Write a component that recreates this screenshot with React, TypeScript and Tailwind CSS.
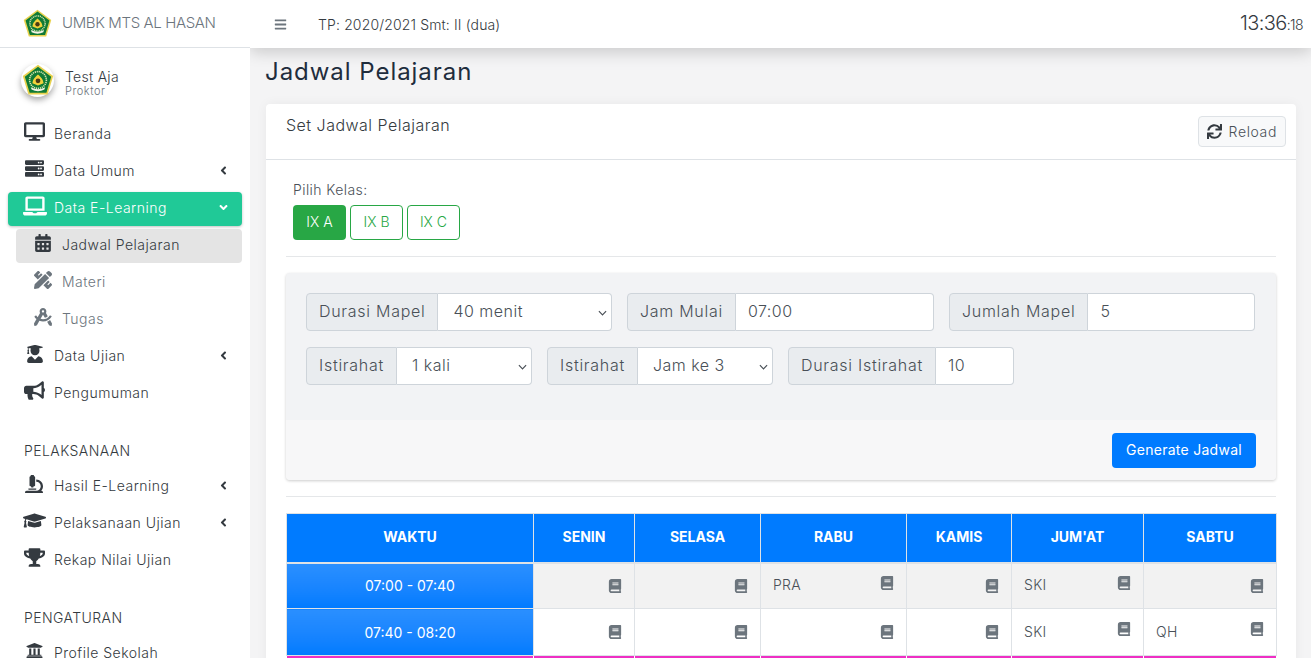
import type { ReactNode } from "react";
import {
  FaAngleDown,
  FaAngleLeft,
  FaBars,
  FaBook,
  FaBullhorn,
  FaCalendarAlt,
  FaDesktop,
  FaDraftingCompass,
  FaGraduationCap,
  FaLaptop,
  FaMicroscope,
  FaPencilRuler,
  FaServer,
  FaSync,
  FaTrophy,
  FaUniversity,
  FaUserGraduate,
} from "react-icons/fa";

function Logo({ className }: { className: string }) {
  return (
    <svg viewBox="0 0 40 40" className={className}>
      <polygon points="20,1 39,15 32,38 8,38 1,15" fill="#e9d24f" />
      <polygon points="20,3.5 36.5,15.8 30.5,36 9.5,36 3.5,15.8" fill="#0f7a35" />
      <circle cx="20" cy="20" r="10.5" fill="none" stroke="#d8e6b0" strokeWidth="2" strokeDasharray="1.5 1" />
      <path d="M20 13 C16 17 14 18 13 24 L20 27 L27 24 C26 18 24 17 20 13Z" fill="#f2d23c" />
      <circle cx="20" cy="21" r="3" fill="#4b3a12" />
      <path d="M11 29 Q20 34 29 29 L28 32 Q20 36 12 32Z" fill="#f4f4e4" />
    </svg>
  );
}

type MenuItem = { icon: ReactNode; label: string; chevron?: boolean };

function Item({ icon, label, chevron }: MenuItem) {
  return (
    <a className="mx-2 mb-[3px] flex h-[34px] items-center pb-1 pl-4 pr-3 text-[#343a40]">
      <span className="-mt-[3px] flex w-[30px] shrink-0 text-[20px]">{icon}</span>
      <span className="flex-1 text-[14px] tracking-[0.035em]">{label}</span>
      {chevron && <FaAngleLeft className="text-[13px]" />}
    </a>
  );
}

function SubItem({ icon, label, active }: { icon: ReactNode; label: string; active?: boolean }) {
  return (
    <a
      className={`ml-4 mr-2 mb-[3px] flex h-[34px] items-center rounded pb-1 pl-[18px] ${
        active ? "bg-[#e4e4e4] text-[#343a40]" : "text-[#6c757d]"
      }`}
    >
      <span className="-mt-[3px] flex w-[28px] shrink-0 text-[18px]">{icon}</span>
      <span className="text-[14px] tracking-[0.035em]">{label}</span>
    </a>
  );
}

function Sidebar() {
  return (
    <aside className="z-20 h-full w-[250px] shrink-0 bg-white">
      <div className="flex h-[48px] items-center border-b border-[#dee2e6] pl-[23px]">
        <Logo className="h-[29px] w-[29px]" />
        <span className="ml-[10px] text-[15px] tracking-[-0.025em] text-[#6c757d]">UMBK MTS AL HASAN</span>
      </div>
      <div className="flex h-[70px] items-center pb-[6px] pl-[21px]">
        <div className="flex h-[33px] w-[33px] items-center justify-center rounded-full bg-white shadow-[0_3px_6px_rgba(0,0,0,0.35)]">
          <Logo className="h-[32px] w-[32px]" />
        </div>
        <div className="ml-[11px] mt-[5px]">
          <div className="text-[14px] leading-[17px] tracking-[0.02em] text-[#343a40]">Test Aja</div>
          <div className="text-[11px] leading-[13px] tracking-[0.05em] text-[#6c757d]">Proktor</div>
        </div>
      </div>
      <nav>
        <Item icon={<FaDesktop className="text-[21px]" />} label="Beranda" />
        <Item icon={<FaServer className="ml-px text-[19px]" />} label="Data Umum" chevron />
        <a className="mx-2 mb-[3px] flex h-[34px] items-center rounded bg-[#20c997] pb-1 pl-4 pr-3 text-white shadow-[0_1px_3px_rgba(0,0,0,0.25)]">
          <span className="-mt-[3px] flex w-[30px] shrink-0">
            <FaLaptop className="-ml-px text-[24px]" />
          </span>
          <span className="flex-1 text-[14px] tracking-[0.035em]">Data E-Learning</span>
          <FaAngleDown className="text-[13px]" />
        </a>
        <SubItem active icon={<FaCalendarAlt />} label="Jadwal Pelajaran" />
        <SubItem icon={<FaPencilRuler />} label="Materi" />
        <SubItem icon={<FaDraftingCompass />} label="Tugas" />
        <Item icon={<FaUserGraduate className="ml-[1.5px] text-[18px]" />} label="Data Ujian" chevron />
        <Item icon={<FaBullhorn className="text-[21px]" />} label="Pengumuman" />
        <div className="mt-[31px] mb-[11px] pl-6 text-[14px] leading-[17px] tracking-[0.03em] text-[#343a40]">PELAKSANAAN</div>
        <Item icon={<FaMicroscope className="ml-px text-[18px]" />} label="Hasil E-Learning" chevron />
        <Item icon={<FaGraduationCap className="-ml-px text-[23px]" />} label="Pelaksanaan Ujian" chevron />
        <Item icon={<FaTrophy className="text-[21px]" />} label="Rekap Nilai Ujian" />
        <div className="mt-[31px] mb-[11px] pl-6 text-[14px] leading-[17px] tracking-[0.03em] text-[#343a40]">PENGATURAN</div>
        <Item icon={<FaUniversity className="ml-[2px] text-[17px]" />} label="Profile Sekolah" />
      </nav>
    </aside>
  );
}

function Label({ children }: { children: ReactNode }) {
  return (
    <span className="flex h-full shrink-0 items-center rounded-l border border-[#ced4da] bg-[#e9ecef] px-3 pb-0.5 text-[16px] tracking-[0.045em] text-[#495057]">
      {children}
    </span>
  );
}

function SelectField({ label, value, className }: { label: string; value: string; className: string }) {
  return (
    <div className={`flex h-[38px] ${className}`}>
      <Label>{label}</Label>
      <div className="relative h-full min-w-0 flex-1">
        <select
          defaultValue={value}
          className="h-full w-full appearance-none rounded-r border border-l-0 border-[#ced4da] bg-white pb-0.5 pl-[15px] text-[16px] tracking-[0.03em] text-[#495057]"
        >
          <option>{value}</option>
        </select>
        <svg viewBox="0 0 10 6" className="pointer-events-none absolute right-[5px] top-[17px] h-[6px] w-[9px]">
          <path d="M1 1l4 4 4-4" fill="none" stroke="#495057" strokeWidth="1.3" />
        </svg>
      </div>
    </div>
  );
}

function InputField({ label, value, className }: { label: string; value: string; className: string }) {
  return (
    <div className={`flex h-[38px] ${className}`}>
      <Label>{label}</Label>
      <input
        defaultValue={value}
        className="h-full w-full min-w-0 flex-1 rounded-r border border-l-0 border-[#ced4da] bg-white px-3 pb-0.5 text-[16px] tracking-[0.03em] text-[#495057]"
      />
    </div>
  );
}

const days = ["SENIN", "SELASA", "RABU", "KAMIS", "JUM'AT", "SABTU"];
const rows = [
  { time: "07:00 - 07:40", cells: ["", "", "PRA", "", "SKI", ""], bg: "bg-[#f2f2f2]", height: "h-[46px]" },
  { time: "07:40 - 08:20", cells: ["", "", "", "", "SKI", "QH"], bg: "bg-white", height: "h-[47px]" },
];

function Schedule() {
  return (
    <table className="w-[990px] table-fixed border-collapse text-[14px]">
      <colgroup>
        <col className="w-[247px]" />
        <col className="w-[101px]" />
        <col className="w-[126px]" />
        <col className="w-[146px]" />
        <col className="w-[105px]" />
        <col className="w-[132px]" />
        <col className="w-[133px]" />
      </colgroup>
      <thead>
        <tr className="h-[49px] bg-[#007bff] text-[14px] font-bold text-white">
          <th className="border border-[#dee2e6] border-b-2 pb-0.5">WAKTU</th>
          {days.map((d) => (
            <th key={d} className="border border-[#dee2e6] border-b-2 pb-0.5">
              {d}
            </th>
          ))}
        </tr>
      </thead>
      <tbody>
        {rows.map((r) => (
          <tr key={r.time} className={`${r.height} ${r.bg}`}>
            <td className="border border-[#dee2e6] bg-linear-to-b from-[#2a8fff] to-[#007bff] text-center text-[14px] font-normal text-white">
              {r.time}
            </td>
            {r.cells.map((c, i) => (
              <td key={i} className="border border-[#dee2e6] pl-3 pr-[12px] text-[#495057]">
                <div className="flex items-center justify-between">
                  <span className="-mt-0.5 tracking-[0.02em]">{c}</span>
                  <FaBook className={`text-[14px] text-[#6c757d] ${c ? "-mt-[6px]" : ""}`} />
                </div>
              </td>
            ))}
          </tr>
        ))}
        <tr className="h-[46px] bg-[#ee2fc4]">
          {Array.from({ length: 7 }, (_, i) => (
            <td key={i} className="border border-white" />
          ))}
        </tr>
      </tbody>
    </table>
  );
}

export default function App() {
  return (
    <div className="flex h-[658px] w-[1311px] overflow-hidden bg-[#f4f4f5] font-['Inter',sans-serif] font-light">
      <Sidebar />
      <div className="flex h-full min-w-0 flex-1 flex-col">
        <header className="z-10 flex h-[48px] shrink-0 items-center bg-white pl-6 pr-[8px] shadow-[0_4px_16px_rgba(0,0,0,0.18)]">
          <FaBars className="text-[13px] text-[#6c757d]" />
          <span className="ml-[31px] flex-1 text-[14px] tracking-[0.01em] text-[#343a40]">TP: 2020/2021 Smt: II (dua)</span>
          <span className="pb-0.5 text-[20px] tracking-[-0.03em] text-[#343a40]">
            13:36<span className="text-[14px]">:18</span>
          </span>
        </header>
        <main className="pl-4 pr-[15px]">
          <h1 className="ml-[-1px] mt-[7px] h-[49px] text-[24px] font-normal leading-[34px] tracking-[0.04em] text-[#1f2d3d]">
            Jadwal Pelajaran
          </h1>
          <section className="rounded bg-white shadow-[0_0_12px_rgba(0,0,0,0.05)]">
            <div className="flex h-[56px] justify-between border-b border-[#dee2e6] pl-5 pr-[10px]">
              <h3 className="mt-[11px] text-[16px] leading-[20px] tracking-[0.03em] text-[#343a40]">Set Jadwal Pelajaran</h3>
              <button className="mt-[12px] flex h-[31px] items-center rounded border border-[#dee2e6] bg-[#f8f9fa] px-[8px] pb-px text-[14px] tracking-[0.045em] text-[#495057]">
                <FaSync className="mr-[7px] text-[15px] text-[#343a40]" />
                Reload
              </button>
            </div>
            <div className="px-5 pt-[21px]">
              <div className="ml-[7px] text-[14px] leading-[17px] tracking-[0.03em] text-[#495057]">Pilih Kelas:</div>
              <div className="ml-[7px] mt-[7px] flex gap-[4px]">
                <button className="h-[35px] w-[53px] rounded bg-[#28a745] pb-0.5 text-[14px] text-white">IX A</button>
                <button className="h-[35px] w-[53px] rounded border border-[#28a745] pb-0.5 text-[14px] text-[#28a745]">IX B</button>
                <button className="h-[35px] w-[53px] rounded border border-[#28a745] pb-0.5 text-[14px] text-[#28a745]">IX C</button>
              </div>
              <hr className="mt-4 border-[#e5e7e9]" />
              <div className="mt-4 overflow-hidden rounded bg-[#f2f3f5] shadow-[0_1px_3px_rgba(0,0,0,0.2)]">
                <div className="h-[147px] px-5 pt-5">
                  <div className="flex gap-[15px]">
                    <SelectField label="Durasi Mapel" value="40 menit" className="w-[306px]" />
                    <InputField label="Jam Mulai" value="07:00" className="w-[307px]" />
                    <InputField label="Jumlah Mapel" value="5" className="w-[306px]" />
                  </div>
                  <div className="mt-4 flex gap-[15px]">
                    <SelectField label="Istirahat" value="1 kali" className="w-[226px]" />
                    <SelectField label="Istirahat" value="Jam ke 3" className="w-[226px]" />
                    <InputField label="Durasi Istirahat" value="10" className="w-[226px]" />
                  </div>
                </div>
                <div className="flex h-[60px] items-start justify-end bg-[#f7f7f8] pr-5 pt-[13px]">
                  <button className="h-[35px] w-[144px] rounded bg-[#007bff] pb-0.5 text-[14px] font-normal tracking-[0.02em] text-white">Generate Jadwal</button>
                </div>
              </div>
              <hr className="mt-4 border-[#e5e7e9]" />
              <div className="mt-[16px]">
                <Schedule />
              </div>
            </div>
          </section>
        </main>
      </div>
    </div>
  );
}
